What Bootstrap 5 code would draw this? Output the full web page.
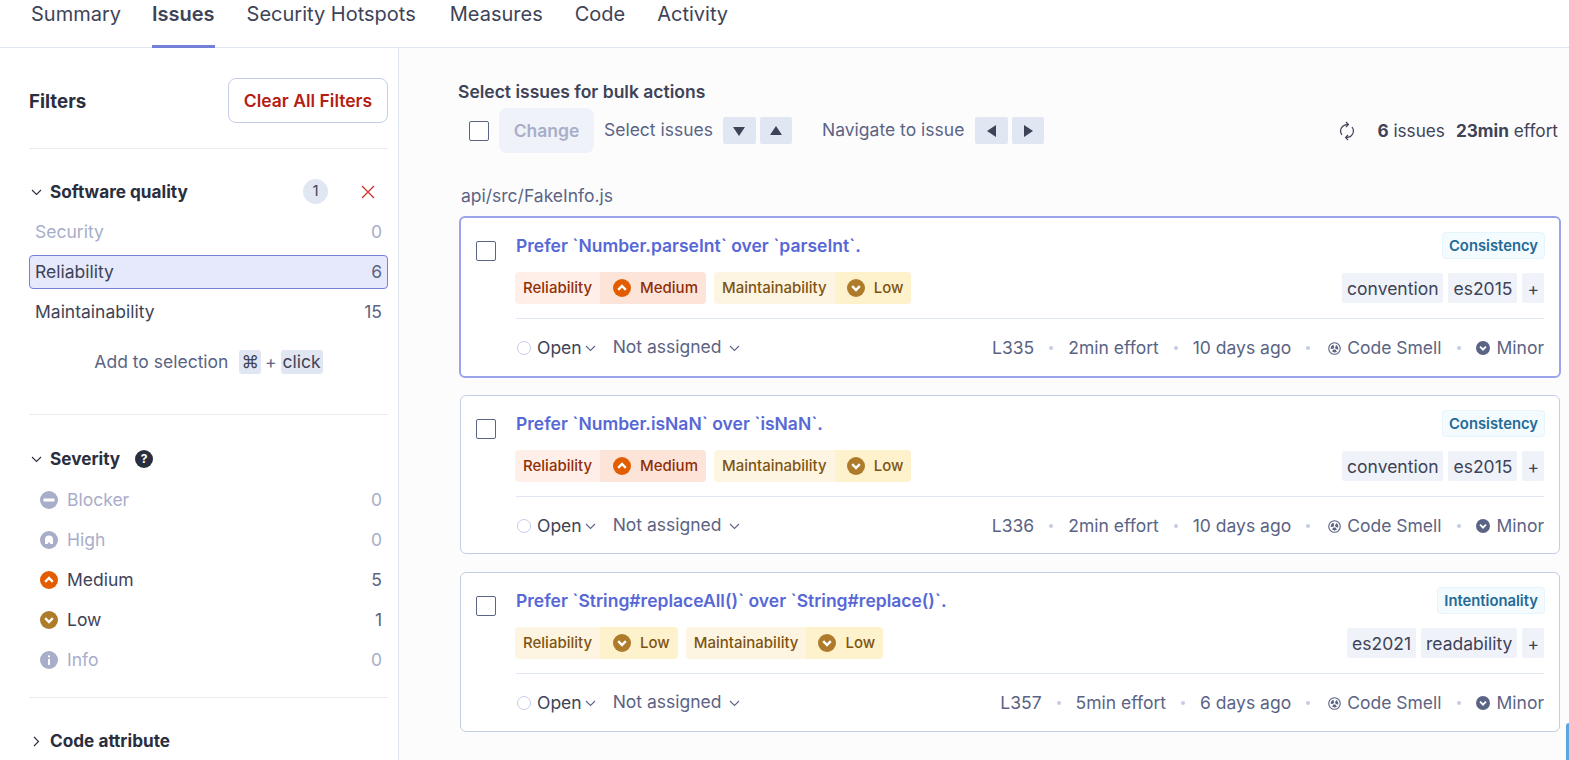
<!DOCTYPE html>
<html lang="en">

<head>
    <meta charset="UTF-8" />
    <title>Issues</title>
    <link href="https://cdn.jsdelivr.net/npm/bootstrap@5.3.3/dist/css/bootstrap.min.css" rel="stylesheet" />
    <style>
        html, body { height: 760px; overflow: hidden; }
        body { font-family: Inter, "Liberation Sans", sans-serif; font-size: 17.5px; color: #3e4357; background: #fff; }

        /* tabs */
        .top-tabs { height: 48px; border-bottom: 1px solid #e1e6f3; padding-left: 31px; gap: 32px; }
        .top-tab { font-size: 20px; line-height: 28px; color: #3e4357; height: 47px; text-decoration: none; }
        .top-tab.on { font-weight: 600; border-bottom: 3px solid #7480d8; height: 48px; }
        .top-tab.tight { margin-right: -1px; }
        .top-tab.wide { margin-right: 2px; }

        .page-cols { height: 712px; }

        /* sidebar */
        .side { width: 399px; flex: none; border-right: 1px solid #e1e6f3; padding: 30px 10px 0 29px; }
        .side-head { height: 45px; }
        .side-title { font-size: 18.7px; font-weight: 700; color: #2a2f40; padding-top: 4px; }
        .btn-clear { height: 45px; width: 160px; border: 1px solid #c5cde6; border-radius: 8px; color: #b51d13; font-size: 17.5px; font-weight: 600; background: #fff; padding: 2px 0 0; }
        .side-line { border-top: 1px solid #ebebeb; }
        .facet-head { height: 24px; font-size: 17.2px; font-weight: 700; color: #2a2f40; }
        .facet-head svg.chev { width: 11px; margin-right: 8px; margin-left: 2px; }
        .facet-count { width: 25px; height: 25px; margin-top: -1px; border-radius: 50%; background: #e1e6f3; font-size: 15px; font-weight: 400; color: #3e4357; }
        .facet-x { margin: -1px 13px 0 33px; }
        .facet-row { height: 34px; margin-top: 6px; padding: 0 5px; border: 1px solid transparent; border-radius: 4px; }
        .facet-row .num { color: #5b6484; }
        .facet-row.off, .facet-row.off .num { color: #a8aec9; }
        .facet-row.picked { background: #e6e9fb; border-color: #7480d8; }
        .sev-name { gap: 9px; padding-left: 5px; }
        .sev-ico { width: 18px; height: 18px; flex: none; display: block; }
        .hint { color: #5b6484; height: 24px; }
        .hint-lbl { margin-right: 7px; }
        .key-cap { background: #e1e6f3; border-radius: 3px; padding: 0 2px; color: #3e4357; line-height: 24px; }

        /* main */
        .main-pane { flex: 1 1 auto; background: #fcfcfd; padding: 30px 8px 0 59px; min-width: 0; }
        .bulk-title { font-weight: 600; color: #3e4357; line-height: 24px; height: 24px; padding-top: 2px; }
        .bulk-bar { height: 45px; margin: 6px 1px 0 0; }
        .chk-box { width: 20px; height: 20px; border: 1px solid #5b6484; border-radius: 2px; background: #fff; flex: none; display: block; }
        .bulk-bar .chk-box { margin-left: 11px; }
        .btn-change { width: 95px; height: 45px; background: #eff2f9; border: 0; border-radius: 8px; color: #a8aec9; font-weight: 600; font-size: 17.5px; padding: 2px 0 0; margin-left: 10px; }
        .lbl-soft { color: #5b6484; }
        .arrow-key { width: 32.5px; height: 27px; background: #e1e6f3; border-radius: 2px; margin-left: 4px; }
        .arrow-key.first { margin-left: 10px; }
        .arrow-key.after-nav { margin-left: 11px; }
        .arrow-key svg { width: 14px; height: 14px; fill: #3e4357; }
        .bar-stats { font-size: 17.2px; }
        .file-path { color: #5b6484; line-height: 24px; margin-top: 31px; padding-left: 3px; height: 24px; }

        .issue-box { border: 1px solid #c5cde6; border-radius: 6px; background: #fff; padding: 14px 15px 0; margin: 18px 1px 0 2px; height: 160px; }
        .issue-box.current { border: 2px solid #9aa4ea; height: 162px; margin: 8px 0 0 1px; }
        .issue-box.second { margin-top: 17px; height: 159px; }
        .issue-box .chk-box { margin-top: 9px; margin-right: 20px; }
        .issue-title { font-weight: 600; color: #5768d6; height: 27px; padding-top: 1px; }
        .attr-chip { height: 27px; margin-right: -1px; font-size: 14.8px; font-weight: 600; color: #236a97; background: #f4fbff; border: 1px solid #e6f4fb; border-radius: 4px; padding: 1px 6px 0; }
        .qual-row { height: 32px; margin-top: 13px; }
        .qual-pill { height: 32px; border-radius: 4px; font-size: 15px; font-weight: 500; overflow: hidden; margin-right: 8px; }
        .qual-pill:first-child { margin-left: -1px; }
        .qual-pill > span { padding: 0 8px; height: 100%; }
        .qual-pill .b { padding-left: 12px; }
        .qual-pill:first-child .b { padding-left: 13px; }
        .qual-pill .sev-ico { margin-right: 9px; }
        .q-med { color: #8f2f0a; }
        .q-med .a { background: #ffefe8; }
        .q-med .b { background: #fde4d8; }
        .q-low { color: #7e5413; }
        .q-low .a { background: #fdf5e1; }
        .q-low .b { background: #fef2cc; }
        .tag-chip { height: 30px; background: #eff2f9; border-radius: 2px; padding: 2px 5px 0; color: #3e4357; margin-left: 5px; }
        .issue-rule { border-top: 1px solid #e1e6f3; margin-top: 14px; }
        .foot-row { height: 28px; margin-top: 15px; color: #5b6484; }
        .open-ring { width: 14px; height: 14px; border: 1px solid #c5cde6; border-radius: 50%; margin: 0 6px 0 1px; flex: none; }
        .open-text { color: #3e4357; margin-right: 3px; }
        .who-text { margin: -2px 0 0 17px; }
        .foot-dot { width: 4px; height: 4px; border-radius: 50%; background: #c5cde6; margin: 0 15px; }
        .mini-chev { width: 11px; height: 7px; }
        .who-chev { margin-left: 7px; }
        .smell-ico { width: 13px; height: 13px; margin: 0 6px 0 3px; }
        .minor-ico { width: 14px; height: 14px; margin-right: 7px; flex: none; }
        .corner-tab { position: absolute; right: 0; top: 723px; width: 3px; height: 37px; background: #5aa6e0; border-radius: 3px 0 0 0; }
    </style>
</head>

<body>

    <svg width="0" height="0" class="position-absolute">
        <symbol id="sev-med" viewBox="0 0 18 18"><circle cx="9" cy="9" r="9" fill="#e25d00" /><path d="M5.2 10.8 9 7l3.8 3.8" fill="none" stroke="#fff" stroke-width="2.4" /></symbol>
        <symbol id="sev-low" viewBox="0 0 18 18"><circle cx="9" cy="9" r="9" fill="#ae7b2a" /><path d="M5.2 7.2 9 11l3.8-3.8" fill="none" stroke="#fff" stroke-width="2.4" /></symbol>
        <symbol id="sev-minor" viewBox="0 0 18 18"><circle cx="9" cy="9" r="9" fill="#5b6484" /><path d="M5.2 7.2 9 11l3.8-3.8" fill="none" stroke="#fff" stroke-width="2.4" /></symbol>
        <symbol id="sev-block" viewBox="0 0 18 18"><circle cx="9" cy="9" r="9" fill="#a8aec9" /><rect x="3.5" y="7.6" width="11" height="2.8" rx="0.6" fill="#fff" /></symbol>
        <symbol id="sev-high" viewBox="0 0 18 18"><circle cx="9" cy="9" r="9" fill="#a8aec9" /><path d="M5 13V8.6a4 4 0 0 1 8 0V13h-2.4L9 11l-1.6 2z" fill="#fff" /></symbol>
        <symbol id="sev-info" viewBox="0 0 18 18"><circle cx="9" cy="9" r="9" fill="#a8aec9" /><rect x="8" y="8" width="2" height="6" fill="#fff" /><rect x="8" y="4.4" width="2" height="2" fill="#fff" /></symbol>
        <symbol id="chev-down" viewBox="0 0 11 7"><path d="M1 1l4.5 4.5L10 1" fill="none" stroke="currentColor" stroke-width="1.1" /></symbol>
        <symbol id="smell" viewBox="0 0 14 14"><circle cx="7" cy="7" r="6.2" fill="none" stroke="#5b6484" stroke-width="1.2" /><circle cx="7" cy="7" r="2.6" fill="none" stroke="#5b6484" stroke-width="3" stroke-dasharray="3.6 1.85" transform="rotate(50 7 7)" /></symbol>
    </svg>

    <!-- tabs -->
    <div class="top-tabs d-flex align-items-start">
        <a class="top-tab tight" href="#">Summary</a>
        <a class="top-tab on" href="#">Issues</a>
        <a class="top-tab wide" href="#">Security Hotspots</a>
        <a class="top-tab" href="#">Measures</a>
        <a class="top-tab" href="#">Code</a>
        <a class="top-tab" href="#">Activity</a>
    </div>

    <div class="page-cols d-flex">
        <!-- filters -->
        <aside class="side">
            <div class="side-head d-flex justify-content-between align-items-center">
                <span class="side-title">Filters</span>
                <button class="btn-clear" type="button">Clear All Filters</button>
            </div>
            <div class="side-line" style="margin-top:25px"></div>

            <div class="facet-head d-flex align-items-center" style="margin-top:31px">
                <svg class="chev" height="7"><use href="#chev-down" /></svg>
                <span class="flex-grow-1">Software quality</span>
                <span class="facet-count d-flex align-items-center justify-content-center">1</span>
                <svg class="facet-x" width="14" height="14" viewBox="0 0 14 14"><path d="M1 1l12 12M13 1 1 13" stroke="#c9362b" stroke-width="1.3" /></svg>
            </div>
            <div class="facet-row off d-flex justify-content-between align-items-center" style="margin-top:11px"><span>Security</span><span class="num">0</span></div>
            <div class="facet-row picked d-flex justify-content-between align-items-center"><span>Reliability</span><span class="num">6</span></div>
            <div class="facet-row d-flex justify-content-between align-items-center"><span>Maintainability</span><span class="num">15</span></div>
            <div class="hint d-flex justify-content-center align-items-center gap-1" style="margin-top:21px">
                <span class="hint-lbl">Add to selection</span><span class="key-cap">⌘</span><span>+</span><span class="key-cap">click</span>
            </div>
            <div class="side-line" style="margin-top:40px"></div>

            <div class="facet-head d-flex align-items-center" style="margin-top:32px">
                <svg class="chev" height="7"><use href="#chev-down" /></svg>
                <span>Severity</span>
                <svg width="18" height="18" viewBox="0 0 18 18" style="margin-left:15px"><circle cx="9" cy="9" r="9" fill="#2a2f40" /><text x="9" y="13.2" text-anchor="middle" font-size="12" font-weight="700" fill="#fff" font-family="Inter">?</text></svg>
            </div>
            <div class="facet-row off d-flex justify-content-between align-items-center" style="margin-top:12px"><span class="sev-name d-flex align-items-center"><svg class="sev-ico"><use href="#sev-block" /></svg>Blocker</span><span class="num">0</span></div>
            <div class="facet-row off d-flex justify-content-between align-items-center"><span class="sev-name d-flex align-items-center"><svg class="sev-ico"><use href="#sev-high" /></svg>High</span><span class="num">0</span></div>
            <div class="facet-row d-flex justify-content-between align-items-center"><span class="sev-name d-flex align-items-center"><svg class="sev-ico"><use href="#sev-med" /></svg>Medium</span><span class="num">5</span></div>
            <div class="facet-row d-flex justify-content-between align-items-center"><span class="sev-name d-flex align-items-center"><svg class="sev-ico"><use href="#sev-low" /></svg>Low</span><span class="num">1</span></div>
            <div class="facet-row off d-flex justify-content-between align-items-center"><span class="sev-name d-flex align-items-center"><svg class="sev-ico"><use href="#sev-info" /></svg>Info</span><span class="num">0</span></div>
            <div class="side-line" style="margin-top:20px"></div>

            <div class="facet-head d-flex align-items-center" style="margin-top:31px">
                <svg class="chev" height="11" style="transform:rotate(-90deg)" viewBox="0 0 11 7"><use href="#chev-down" /></svg>
                <span>Code attribute</span>
            </div>
        </aside>

        <!-- issues -->
        <main class="main-pane">
            <div class="bulk-title">Select issues for bulk actions</div>
            <div class="bulk-bar d-flex align-items-center">
                <span class="chk-box"></span>
                <button class="btn-change" type="button">Change</button>
                <span class="lbl-soft" style="margin-left:10px">Select issues</span>
                <span class="arrow-key first d-flex align-items-center justify-content-center"><svg viewBox="0 0 14 14"><path d="M1 3h12L7 12z" /></svg></span>
                <span class="arrow-key d-flex align-items-center justify-content-center"><svg viewBox="0 0 14 14"><path d="M1 11h12L7 2z" /></svg></span>
                <span class="lbl-soft" style="margin-left:30px">Navigate to issue</span>
                <span class="arrow-key after-nav d-flex align-items-center justify-content-center"><svg viewBox="0 0 14 14"><path d="M11 1v12L2 7z" /></svg></span>
                <span class="arrow-key d-flex align-items-center justify-content-center"><svg viewBox="0 0 14 14"><path d="M3 1v12l9-6z" /></svg></span>
                <svg class="ms-auto" width="16" height="20" viewBox="0 0 16 20" fill="none" stroke="#3e4357" stroke-width="1.2"><path d="M3 14A6.5 6.5 0 0 1 9 3.6M13 6a6.5 6.5 0 0 1-6 10.4" /><path d="M7 1l2.4 2.6L7 6M9 14l-2.4 2.6L9 19" /></svg>
                <span class="bar-stats" style="margin-left:22px"><b class="fw-bold">6</b> issues</span>
                <span class="bar-stats" style="margin:0 2px 0 11px"><b class="fw-bold">23min</b> effort</span>
            </div>

            <div class="file-path">api/src/FakeInfo.js</div>

            <div class="issue-box current d-flex">
                <span class="chk-box"></span>
                <div class="flex-grow-1">
                    <div class="d-flex justify-content-between align-items-center">
                        <span class="issue-title d-flex align-items-center">Prefer `Number.parseInt` over `parseInt`.</span>
                        <span class="attr-chip d-flex align-items-center">Consistency</span>
                    </div>
                    <div class="qual-row d-flex align-items-center">
                        <span class="qual-pill q-med d-flex"><span class="a d-flex align-items-center">Reliability</span><span class="b d-flex align-items-center"><svg class="sev-ico"><use href="#sev-med" /></svg>Medium</span></span>
                        <span class="qual-pill q-low d-flex"><span class="a d-flex align-items-center">Maintainability</span><span class="b d-flex align-items-center"><svg class="sev-ico"><use href="#sev-low" /></svg>Low</span></span>
                        <span class="tag-chip d-flex align-items-center ms-auto">convention</span><span class="tag-chip d-flex align-items-center">es2015</span><span class="tag-chip d-flex align-items-center">+</span>
                    </div>
                    <div class="issue-rule"></div>
                    <div class="foot-row d-flex align-items-center">
                        <span class="open-ring"></span><span class="open-text">Open</span><svg class="mini-chev"><use href="#chev-down" /></svg>
                        <span class="who-text">Not assigned</span><svg class="mini-chev who-chev"><use href="#chev-down" /></svg>
                        <span class="ms-auto">L335</span><span class="foot-dot"></span><span>2min effort</span><span class="foot-dot"></span><span>10 days ago</span><span class="foot-dot"></span>
                        <svg class="smell-ico"><use href="#smell" /></svg><span>Code Smell</span><span class="foot-dot"></span>
                        <svg class="minor-ico"><use href="#sev-minor" /></svg><span>Minor</span>
                    </div>
                </div>
            </div>

            <div class="issue-box second d-flex">
                <span class="chk-box"></span>
                <div class="flex-grow-1">
                    <div class="d-flex justify-content-between align-items-center">
                        <span class="issue-title d-flex align-items-center">Prefer `Number.isNaN` over `isNaN`.</span>
                        <span class="attr-chip d-flex align-items-center">Consistency</span>
                    </div>
                    <div class="qual-row d-flex align-items-center">
                        <span class="qual-pill q-med d-flex"><span class="a d-flex align-items-center">Reliability</span><span class="b d-flex align-items-center"><svg class="sev-ico"><use href="#sev-med" /></svg>Medium</span></span>
                        <span class="qual-pill q-low d-flex"><span class="a d-flex align-items-center">Maintainability</span><span class="b d-flex align-items-center"><svg class="sev-ico"><use href="#sev-low" /></svg>Low</span></span>
                        <span class="tag-chip d-flex align-items-center ms-auto">convention</span><span class="tag-chip d-flex align-items-center">es2015</span><span class="tag-chip d-flex align-items-center">+</span>
                    </div>
                    <div class="issue-rule"></div>
                    <div class="foot-row d-flex align-items-center">
                        <span class="open-ring"></span><span class="open-text">Open</span><svg class="mini-chev"><use href="#chev-down" /></svg>
                        <span class="who-text">Not assigned</span><svg class="mini-chev who-chev"><use href="#chev-down" /></svg>
                        <span class="ms-auto">L336</span><span class="foot-dot"></span><span>2min effort</span><span class="foot-dot"></span><span>10 days ago</span><span class="foot-dot"></span>
                        <svg class="smell-ico"><use href="#smell" /></svg><span>Code Smell</span><span class="foot-dot"></span>
                        <svg class="minor-ico"><use href="#sev-minor" /></svg><span>Minor</span>
                    </div>
                </div>
            </div>

            <div class="issue-box d-flex">
                <span class="chk-box"></span>
                <div class="flex-grow-1">
                    <div class="d-flex justify-content-between align-items-center">
                        <span class="issue-title d-flex align-items-center">Prefer `String#replaceAll()` over `String#replace()`.</span>
                        <span class="attr-chip d-flex align-items-center">Intentionality</span>
                    </div>
                    <div class="qual-row d-flex align-items-center">
                        <span class="qual-pill q-low d-flex"><span class="a d-flex align-items-center">Reliability</span><span class="b d-flex align-items-center"><svg class="sev-ico"><use href="#sev-low" /></svg>Low</span></span>
                        <span class="qual-pill q-low d-flex"><span class="a d-flex align-items-center">Maintainability</span><span class="b d-flex align-items-center"><svg class="sev-ico"><use href="#sev-low" /></svg>Low</span></span>
                        <span class="tag-chip d-flex align-items-center ms-auto">es2021</span><span class="tag-chip d-flex align-items-center">readability</span><span class="tag-chip d-flex align-items-center">+</span>
                    </div>
                    <div class="issue-rule"></div>
                    <div class="foot-row d-flex align-items-center">
                        <span class="open-ring"></span><span class="open-text">Open</span><svg class="mini-chev"><use href="#chev-down" /></svg>
                        <span class="who-text">Not assigned</span><svg class="mini-chev who-chev"><use href="#chev-down" /></svg>
                        <span class="ms-auto">L357</span><span class="foot-dot"></span><span>5min effort</span><span class="foot-dot"></span><span>6 days ago</span><span class="foot-dot"></span>
                        <svg class="smell-ico"><use href="#smell" /></svg><span>Code Smell</span><span class="foot-dot"></span>
                        <svg class="minor-ico"><use href="#sev-minor" /></svg><span>Minor</span>
                    </div>
                </div>
            </div>
        </main>
    </div>

    <div class="corner-tab"></div>

    <script src="https://cdn.jsdelivr.net/npm/bootstrap@5.3.3/dist/js/bootstrap.bundle.min.js"></script>
</body>

</html>
